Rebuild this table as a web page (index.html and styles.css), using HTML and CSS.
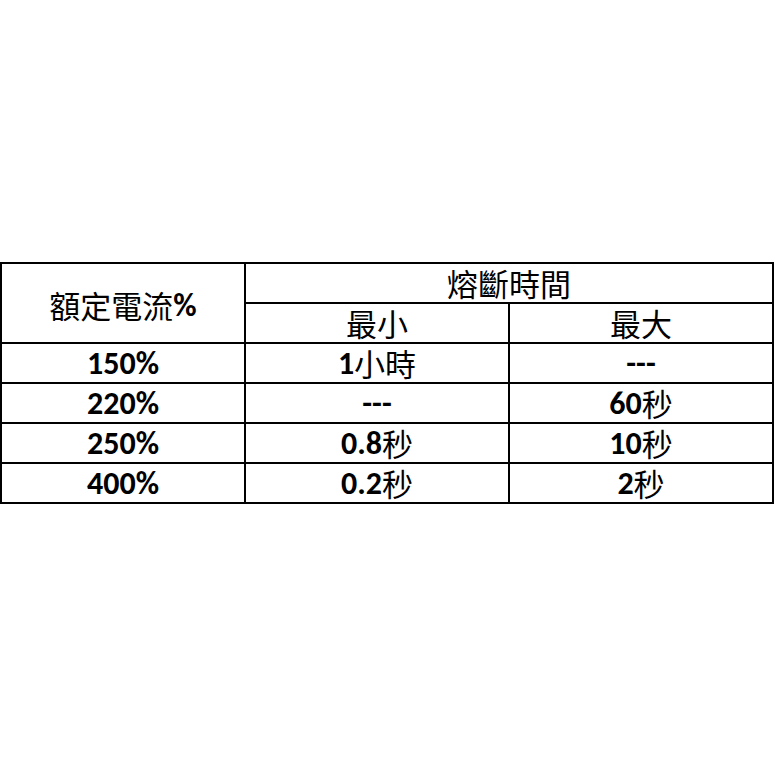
FILE: index.html
```html
<!DOCTYPE html>
<html lang="zh-Hant">
<head>
<meta charset="utf-8">
<link rel="stylesheet" href="styles.css">
</head>
<body>
<div class="page">
  <div class="fuse-table">
    <div class="cell rowhead"><span class="txt">額定電流<b class="num">%</b></span></div>
    <div class="cell grouphead"><span class="txt">熔斷時間</span></div>
    <div class="cell"><span class="txt">最小</span></div>
    <div class="cell"><span class="txt">最大</span></div>

    <div class="cell"><span class="txt"><b class="num">150%</b></span></div>
    <div class="cell"><span class="txt"><b class="num">1</b>小時</span></div>
    <div class="cell"><span class="txt"><b class="num">---</b></span></div>

    <div class="cell"><span class="txt"><b class="num">220%</b></span></div>
    <div class="cell"><span class="txt"><b class="num">---</b></span></div>
    <div class="cell"><span class="txt"><b class="num">60</b>秒</span></div>

    <div class="cell"><span class="txt"><b class="num">250%</b></span></div>
    <div class="cell"><span class="txt"><b class="num">0.8</b>秒</span></div>
    <div class="cell"><span class="txt"><b class="num">10</b>秒</span></div>

    <div class="cell"><span class="txt"><b class="num">400%</b></span></div>
    <div class="cell"><span class="txt"><b class="num">0.2</b>秒</span></div>
    <div class="cell"><span class="txt"><b class="num">2</b>秒</span></div>
  </div>
</div>
</body>
</html>
```

FILE: styles.css
```css
html, body {
  margin: 0;
  padding: 0;
  background: #fff;
}

.page {
  padding-top: 262px;
}

.fuse-table {
  display: grid;
  grid-template-columns: 242px 262px 262px;
  grid-auto-rows: 38px;
  gap: 2px;
  padding: 2px;
  background: #000;
  width: max-content;
}

.cell {
  background: #fff;
  display: flex;
  align-items: center;
  justify-content: center;
  overflow: visible;
  font-family: "Noto Sans CJK TC", "Noto Sans CJK SC", sans-serif;
  font-size: 31px;
  font-weight: 400;
  color: #000;
  white-space: nowrap;
}

.txt {
  display: block;
  line-height: 34px;
  height: 34px;
}

.rowhead {
  grid-row: span 2;
  padding-top: 4px;
}

.grouphead {
  grid-column: span 2;
}

.num {
  font-family: "Carlito", "Lato", "Open Sans", sans-serif;
  font-weight: 700;
  font-size: 32px;
  line-height: 1;
  vertical-align: 2px;
}
```
